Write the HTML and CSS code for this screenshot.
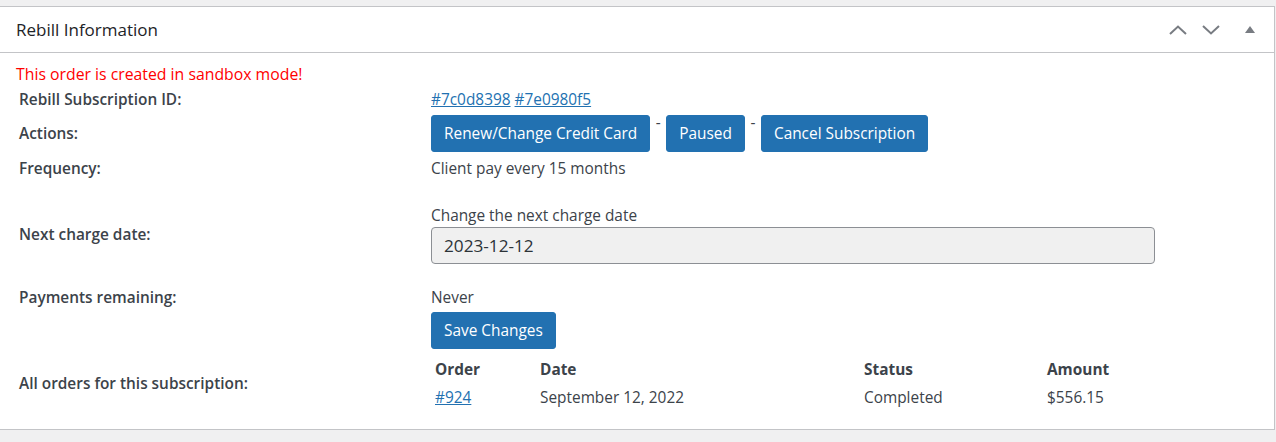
FILE: index.html
```html
<!DOCTYPE html>
<html>
<head>
<meta charset="utf-8">
<link rel="stylesheet" href="styles.css">
</head>
<body>
<div class="postbox">
  <div class="postbox-header">
    <h2 class="title">Rebill Information</h2>
    <div class="handles">
      <svg class="chev" width="18" height="10" viewBox="0 0 18 10"><path d="M1 9 L9 1.5 L17 9" fill="none" stroke="#787c82" stroke-width="2"/></svg>
      <svg class="chev" width="18" height="10" viewBox="0 0 18 10"><path d="M1 1 L9 8.5 L17 1" fill="none" stroke="#787c82" stroke-width="2"/></svg>
      <svg class="tri" width="10" height="7" viewBox="0 0 10 7"><path d="M5 0 L10 7 L0 7 Z" fill="#787c82"/></svg>
    </div>
  </div>
  <div class="inside">
    <p class="sandbox">This order is created in sandbox mode!</p>
    <div class="row r-id">
      <div class="label">Rebill Subscription ID:</div>
      <div class="value"><a href="#">#7c0d8398</a> <a href="#">#7e0980f5</a></div>
    </div>
    <div class="row r-actions">
      <div class="label">Actions:</div>
      <div class="value actions">
        <button class="btn">Renew/Change Credit Card</button><span class="dash">-</span><button class="btn">Paused</button><span class="dash">-</span><button class="btn">Cancel Subscription</button>
      </div>
    </div>
    <div class="row r-freq">
      <div class="label">Frequency:</div>
      <div class="value">Client pay every 15 months</div>
    </div>
    <div class="row r-next">
      <div class="label">Next charge date:</div>
      <div class="value">
        <div class="caption">Change the next charge date</div>
        <div class="input">2023-12-12</div>
      </div>
    </div>
    <div class="row r-pay">
      <div class="label">Payments remaining:</div>
      <div class="value">Never</div>
    </div>
    <div class="row r-save">
      <div class="label"></div>
      <div class="value"><button class="btn">Save Changes</button></div>
    </div>
    <div class="row r-orders">
      <div class="label">All orders for this subscription:</div>
      <div class="value">
        <div class="orders">
          <div class="th c1">Order</div><div class="th c2">Date</div><div class="th c3">Status</div><div class="th c4">Amount</div>
          <div class="td c1"><a href="#">#924</a></div><div class="td c2">September 12, 2022</div><div class="td c3">Completed</div><div class="td c4">$556.15</div>
        </div>
      </div>
    </div>
  </div>
</div>
</body>
</html>
```
FILE: styles.css
```css
html, body {
  margin: 0;
  padding: 0;
  background: #f0f0f1;
}
body {
  font-family: "Open Sans", "Noto Sans", sans-serif;
  color: #3c434a;
  font-size: 15.4px;
  padding-top: 6px;
  height: 442px;
  box-sizing: border-box;
}
.postbox {
  background: #fff;
  border: 1px solid #c3c4c7;
  border-left: none;
  width: 1275px;
  height: 424px;
  box-sizing: border-box;
}
.postbox-header {
  height: 46px;
  border-bottom: 1px solid #c3c4c7;
  display: flex;
  align-items: center;
  justify-content: space-between;
  box-sizing: border-box;
}
.title {
  margin: 0;
  padding-left: 16px;
  font-size: 17px;
  font-weight: 400;
  color: #1d2327;
}
.handles {
  display: flex;
  align-items: center;
  padding-right: 19px;
  padding-top: 1px;
}
.chev { display: block; margin-right: 15px; }
.chev + .chev { margin-right: 25px; }
.tri { display: block; margin-top: -2px; }
.inside {
  padding: 0 0 0 16px;
}
.sandbox {
  margin: 0;
  padding-top: 11px;
  line-height: 20px;
  color: #ff0000;
  font-size: 15.8px;
}
.row {
  display: flex;
  align-items: center;
}
.label {
  width: 415px;
  padding-left: 3px;
  box-sizing: border-box;
  font-weight: 600;
  flex: none;
}
.value { flex: 1; }
a { color: #2271b1; text-decoration: underline; }
.r-id { height: 22px; margin-top: 4px; }
.r-actions { margin-top: 5px; }
.actions { display: flex; align-items: flex-start; }
.btn {
  font-family: inherit;
  font-size: 15.4px;
  background: #2271b1;
  color: #fff;
  border: 1px solid #2271b1;
  border-radius: 3px;
  height: 37px;
  padding: 0 12px;
  line-height: 35px;
  cursor: pointer;
}
.dash { width: 16px; text-align: center; line-height: 20px; margin-top: -2px; }
.r-freq { height: 22px; margin-top: 5px; }
.r-next { margin-top: 26px; }
.caption { line-height: 22px; }
.input {
  margin-top: 0;
  width: 724px;
  height: 37px;
  box-sizing: border-box;
  background: #f0f0f0;
  border: 1px solid #8c8f94;
  border-radius: 4px;
  padding: 0 12px;
  line-height: 35px;
  font-size: 17.2px;
  color: #2c3338;
}
.r-pay { height: 22px; margin-top: 22px; }
.r-save { margin-top: 4px; }
.r-orders { margin-top: 8px; }
.orders {
  display: grid;
  grid-template-columns: 105px 324px 183px 200px;
  padding-left: 4px;
}
.th { font-weight: 700; line-height: 22px; color: #3c434a; margin-top: 2px; }
.td { line-height: 22px; margin-top: 6px; }
```
